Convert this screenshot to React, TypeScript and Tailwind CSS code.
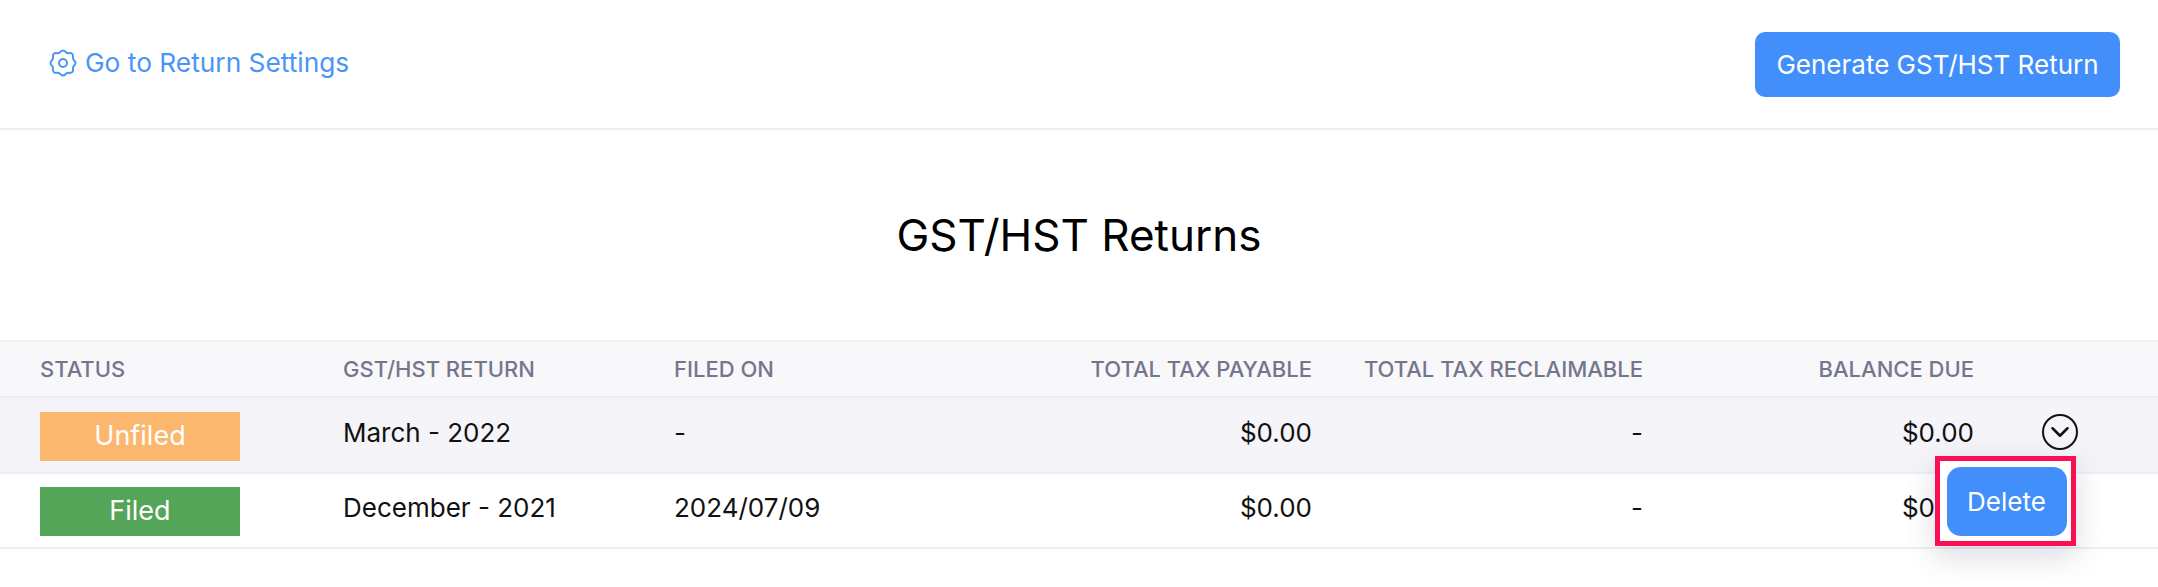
import { ChevronDown } from 'lucide-react';

const rowGrid = 'grid grid-cols-[303px_331px_330px_308px_331px_331px_1fr] pl-[40px] items-center';

const rows = [
  { status: 'Unfiled', badge: 'bg-[#fcb76e]', height: 'h-[76px]', period: 'March - 2022', filed: '-', payable: '$0.00', reclaim: '-', balance: '$0.00' },
  { status: 'Filed', badge: 'bg-[#54a557]', height: 'h-[75px]', period: 'December - 2021', filed: '2024/07/09', payable: '$0.00', reclaim: '-', balance: '$0.00' },
];

export default function App() {
  return (
    <div className="w-[2158px] h-[587px] bg-white overflow-hidden font-['Inter',sans-serif] text-[#111]">
      <div className="h-[130px] flex items-center justify-between pl-[49px] pr-[38px] border-b-2 border-[#eeeef0]">
        <a className="flex items-center gap-[8px] text-[26.3px] text-[#4b94f7] -mt-[3px]">
          <svg width="28" height="28" viewBox="0 0 28 28" fill="none" stroke="currentColor" strokeWidth="2">
            <path d="M14 1.500c2 0 2.600 2 4.300 2.500 1.800.5 3.700-.5 5 .9 1.300 1.400.4 3.200.9 5 .5 1.700 2.300 2.300 2.300 4.100s-1.800 2.400-2.300 4.100c-.5 1.800.4 3.600-.9 5-1.300 1.400-3.200.4-5 .9-1.700.5-2.300 2.500-4.300 2.500s-2.600-2-4.300-2.500c-1.800-.5-3.700.5-5-.9-1.300-1.400-.4-3.200-.9-5C3.300 16.400 1.500 15.800 1.500 14s1.800-2.400 2.300-4.100c.5-1.800-.4-3.600.9-5 1.300-1.400 3.200-.4 5-.9C11.400 3.500 12 1.500 14 1.500z" />
            <circle cx="14" cy="14" r="4" />
          </svg>
          Go to Return Settings
        </a>
        <button className="w-[365px] h-[65px] bg-[#428ffc] rounded-[10px] text-white text-[26px]">Generate GST/HST Return</button>
      </div>

      <h1 className="h-[210px] flex items-center justify-center text-[44px] leading-none text-black">GST/HST Returns</h1>

      <div className="relative">
        <div className={`${rowGrid} h-[58px] bg-[#f8f8fb] border-y-2 border-[#eeeef2] text-[22px] font-medium text-[#74778c]`}>
          <div>STATUS</div>
          <div>GST/HST RETURN</div>
          <div>FILED ON</div>
          <div className="text-right">TOTAL TAX PAYABLE</div>
          <div className="text-right">TOTAL TAX RECLAIMABLE</div>
          <div className="text-right">BALANCE DUE</div>
        </div>
        {rows.map((row, i) => (
          <div
            key={row.status}
            className={`${rowGrid} ${row.height} border-b-2 border-[#eeeef2] text-[26px] ${i === 0 ? 'bg-[#f4f4f9]' : 'bg-white'}`}
          >
            <div>
              <div className={`w-[200px] h-[49px] mt-[2px] flex items-center justify-center text-white text-[27px] ${row.badge}`}>{row.status}</div>
            </div>
            <div className="pb-[6px]">{row.period}</div>
            <div className="pb-[6px]">{row.filed}</div>
            <div className="pb-[6px] text-right">{row.payable}</div>
            <div className="pb-[6px] text-right">{row.reclaim}</div>
            <div className="pb-[6px] text-right">{row.balance}</div>
            {i === 0 && (
              <div className="pl-[68px] pb-[6px]">
                <div className="w-[36px] h-[36px] rounded-full border-2 border-[#111] flex items-center justify-center">
                  <ChevronDown className="w-[30px] h-[30px] shrink-0" strokeWidth={2} />
                </div>
              </div>
            )}
          </div>
        ))}
        <div className="absolute left-[1935px] top-[116px] w-[141px] h-[90px] border-[5px] border-[#fb0f53] bg-white shadow-[0_10px_30px_rgba(70,70,110,0.2)] flex items-center justify-center">
          <button className="w-[120px] h-[69px] ml-[2px] bg-[#428ffc] rounded-[14px] text-white text-[26px]">Delete</button>
        </div>
      </div>
    </div>
  );
}
